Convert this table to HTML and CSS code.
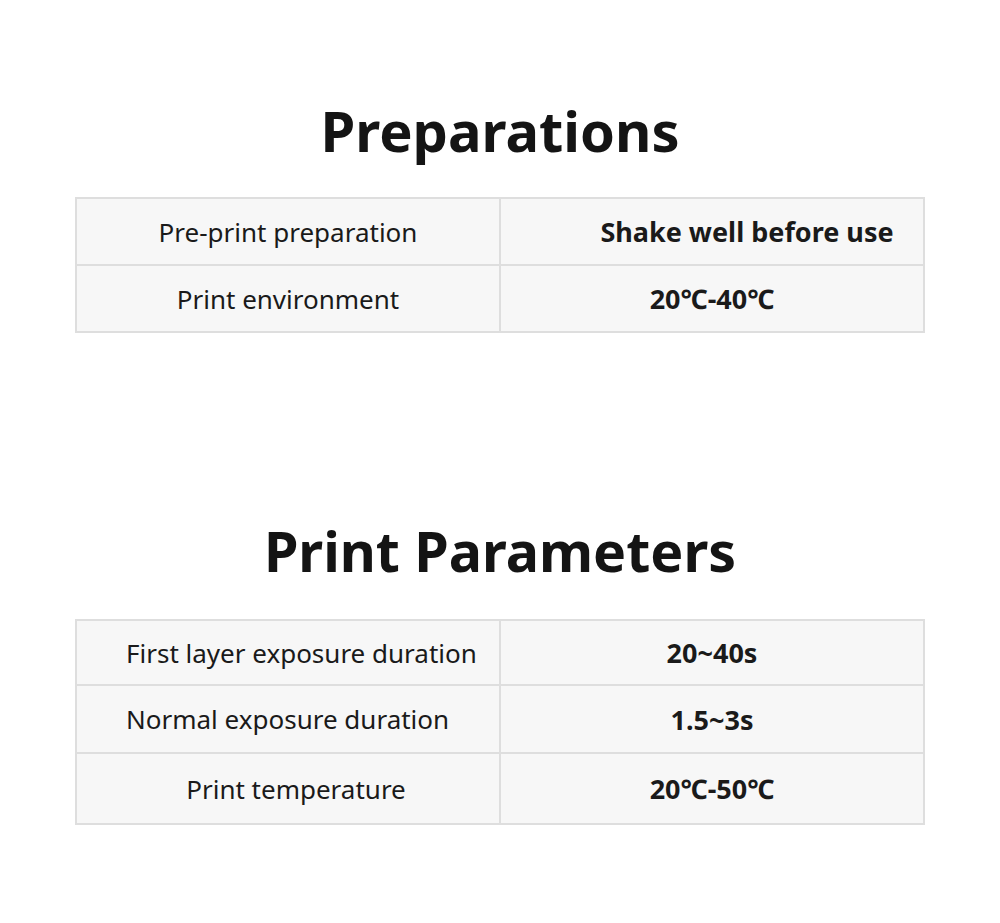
FILE: index.html
```html
<!DOCTYPE html>
<html>
<head>
<meta charset="utf-8">
<link rel="stylesheet" href="styles.css">
</head>
<body>
<section class="block block-prep">
  <h1 class="title">Preparations</h1>
  <table class="spec">
    <colgroup><col class="col-label"><col class="col-value"></colgroup>
    <tr class="r1">
      <td class="label">Pre-print preparation</td>
      <td class="value shake">Shake well before use</td>
    </tr>
    <tr class="r2">
      <td class="label">Print environment</td>
      <td class="value">20℃-40℃</td>
    </tr>
  </table>
</section>
<section class="block block-params">
  <h1 class="title">Print Parameters</h1>
  <table class="spec">
    <colgroup><col class="col-label"><col class="col-value"></colgroup>
    <tr class="p1">
      <td class="label left">First layer exposure duration</td>
      <td class="value">20~40s</td>
    </tr>
    <tr class="p2">
      <td class="label left">Normal exposure duration</td>
      <td class="value">1.5~3s</td>
    </tr>
    <tr class="p3">
      <td class="label shifted">Print temperature</td>
      <td class="value">20℃-50℃</td>
    </tr>
  </table>
</section>
</body>
</html>
```
FILE: styles.css
```css
html, body {
  margin: 0;
  padding: 0;
  background: #ffffff;
}
body {
  width: 1000px;
  height: 923px;
  overflow: hidden;
  font-family: "Noto Sans", "Open Sans", sans-serif;
  color: #1a1a1a;
}
.block {
  display: flex;
  flex-direction: column;
  align-items: center;
}
.block-prep {
  padding-top: 92px;
}
.block-params {
  padding-top: 180px;
}
.title {
  margin: 0;
  font-size: 56px;
  font-weight: 700;
  line-height: 76px;
  color: #141414;
}
.block-params .title { font-size: 55.5px; }
.block-prep .title { margin-bottom: 29px; }
.block-params .title { margin-bottom: 30px; }
.spec {
  width: 848px;
  border-collapse: collapse;
  table-layout: fixed;
  background: #f7f7f7;
}
.col-label { width: 424px; }
.col-value { width: 424px; }
.spec td {
  border: 2px solid #dedede;
  text-align: center;
  font-size: 26px;
  padding: 0;
  color: #1a1a1a;
  white-space: nowrap;
}
.spec td.value {
  font-weight: 700;
  font-size: 27px;
}
.spec td.shake {
  padding-left: 70px;
}
.r1 td, .r2 td { height: 65px; }
.p1 td { height: 63px; }
.p2 td { height: 66px; }
.p3 td { height: 69px; }
.spec td.left {
  text-align: left;
  padding-left: 49px;
}
.spec td.shifted {
  padding-left: 16px;
}
```
